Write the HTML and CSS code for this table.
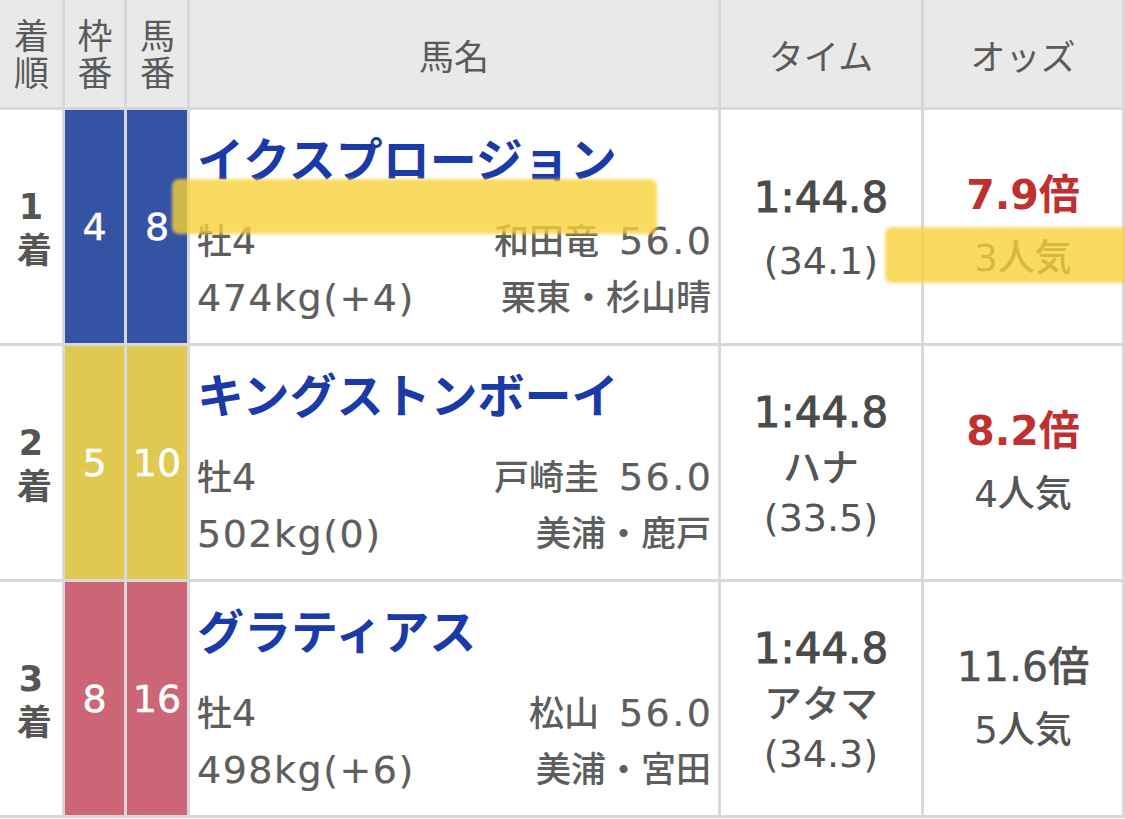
FILE: index.html
```html
<!DOCTYPE html>
<html lang="ja">
<head>
<meta charset="utf-8">
<title>レース結果</title>
<link rel="stylesheet" href="styles.css">
</head>
<body>
<div class="page">
  <div class="table">
    <div class="cell head"><span class="vert">着順</span></div>
    <div class="cell head"><span class="vert">枠番</span></div>
    <div class="cell head"><span class="vert">馬番</span></div>
    <div class="cell head">馬名</div>
    <div class="cell head">タイム</div>
    <div class="cell head">オッズ</div>

    <div class="cell rank"><span class="vert">1着</span></div>
    <div class="cell waku blue">4</div>
    <div class="cell waku blue">8</div>
    <div class="cell horse">
      <div class="name">イクスプロージョン</div>
      <div class="info"><span>牡<span class="l">4</span></span><span>和田竜<span class="l r">56.0</span></span></div>
      <div class="info"><span class="l">474kg(+4)</span><span>栗東・杉山晴</span></div>
    </div>
    <div class="cell time">
      <div class="t">1:44.8</div>
      <div class="margin"></div>
      <div class="sub">(34.1)</div>
    </div>
    <div class="cell odds">
      <div class="o red">7.9倍</div>
      <div class="ninki">3人気</div>
    </div>

    <div class="cell rank"><span class="vert">2着</span></div>
    <div class="cell waku yellow">5</div>
    <div class="cell waku yellow">10</div>
    <div class="cell horse">
      <div class="name">キングストンボーイ</div>
      <div class="info"><span>牡<span class="l">4</span></span><span>戸崎圭<span class="l r">56.0</span></span></div>
      <div class="info"><span class="l">502kg(0)</span><span>美浦・鹿戸</span></div>
    </div>
    <div class="cell time">
      <div class="t">1:44.8</div>
      <div class="sub">ハナ</div>
      <div class="sub">(33.5)</div>
    </div>
    <div class="cell odds">
      <div class="o red">8.2倍</div>
      <div class="ninki">4人気</div>
    </div>

    <div class="cell rank"><span class="vert">3着</span></div>
    <div class="cell waku pink">8</div>
    <div class="cell waku pink">16</div>
    <div class="cell horse">
      <div class="name">グラティアス</div>
      <div class="info"><span>牡<span class="l">4</span></span><span>松山<span class="l r">56.0</span></span></div>
      <div class="info"><span class="l">498kg(+6)</span><span>美浦・宮田</span></div>
    </div>
    <div class="cell time">
      <div class="t">1:44.8</div>
      <div class="sub">アタマ</div>
      <div class="sub">(34.3)</div>
    </div>
    <div class="cell odds">
      <div class="o">11.6倍</div>
      <div class="ninki">5人気</div>
    </div>
  </div>
  <div class="marker m1"></div>
  <div class="marker m2"></div>
</div>
</body>
</html>
```

FILE: styles.css
```css
html, body {
  margin: 0;
  padding: 0;
  background: #ffffff;
}

body {
  font-family: "DejaVu Sans", "Noto Sans CJK JP", sans-serif;
  color: #555555;
}

.page {
  position: relative;
  width: 1125px;
  height: 819px;
  overflow: hidden;
}

.table {
  display: grid;
  grid-template-columns: 62px 59px 60px 528px 200px 198px;
  grid-template-rows: 107px 233px 233px 233px;
  gap: 3px;
  padding: 0 3px 3px 0;
  background: #d8d8d8;
  width: 1125px;
  box-sizing: border-box;
}

.cell {
  background: #ffffff;
  display: flex;
  align-items: center;
  justify-content: center;
}

.head {
  background: #e9e9e9;
  font-family: "Noto Sans CJK JP", sans-serif;
  font-size: 35px;
  font-weight: 400;
  color: #5a5a5a;
  padding-top: 2px;
}

.vert {
  writing-mode: vertical-rl;
  text-orientation: upright;
  line-height: 40px;
}

.head .vert {
  letter-spacing: 2px;
}

.rank {
  font-family: "DejaVu Sans", "Noto Sans CJK JP", sans-serif;
  font-size: 35px;
  font-weight: 700;
  color: #555555;
}

.rank .vert {
  letter-spacing: 5px;
  padding-top: 5px;
}

.waku {
  font-size: 38px;
  color: #ffffff;
  font-weight: 400;
  -webkit-text-stroke: 0.5px #ffffff;
}

.blue { background: #3553a5; }
.yellow { background: #dfc950; }
.pink { background: #cc6677; }

.horse {
  flex-direction: column;
  align-items: stretch;
  justify-content: flex-start;
  padding: 19px 7px 0 7px;
}

.name {
  font-family: "Noto Sans CJK JP", sans-serif;
  font-size: 47px;
  font-weight: 700;
  line-height: 56px;
  color: #1a3aa8;
  white-space: nowrap;
  margin-bottom: 28px;
}

.info {
  display: flex;
  justify-content: space-between;
  font-size: 35px;
  line-height: 56px;
  color: #5e5e5e;
  white-space: nowrap;
  font-weight: 500;
}

.info .l {
  font-size: 38px;
  letter-spacing: 1.5px;
  -webkit-text-stroke: 0.2px #5e5e5e;
}

.info .l.r {
  letter-spacing: 2.5px;
  margin-left: 20px;
  margin-right: -2.5px;
}

.time {
  flex-direction: column;
  text-align: center;
}

.time .t {
  font-size: 42px;
  font-weight: 400;
  line-height: 60px;
  color: #4a4a4a;
  -webkit-text-stroke: 1px #4a4a4a;
}

.time .margin {
  height: 8px;
}

.time .sub {
  font-size: 38px;
  line-height: 50px;
  color: #555555;
  font-weight: 500;
}

.odds {
  flex-direction: column;
  text-align: center;
}

.odds .o {
  font-size: 41px;
  font-weight: 500;
  line-height: 64px;
  color: #505050;
  -webkit-text-stroke: 0.4px #505050;
}

.odds .o.red {
  color: #bf3131;
  font-weight: 700;
  -webkit-text-stroke: 0;
}

.odds .ninki {
  font-size: 37px;
  line-height: 64px;
  font-weight: 500;
  color: #555555;
}

.marker {
  position: absolute;
  background: rgba(247, 210, 58, 0.8);
  border-radius: 7px;
  filter: blur(1.5px);
}

.m1 {
  left: 172px;
  top: 179px;
  width: 485px;
  height: 55px;
}

.m2 {
  left: 885px;
  top: 227px;
  width: 250px;
  height: 56px;
}
```
